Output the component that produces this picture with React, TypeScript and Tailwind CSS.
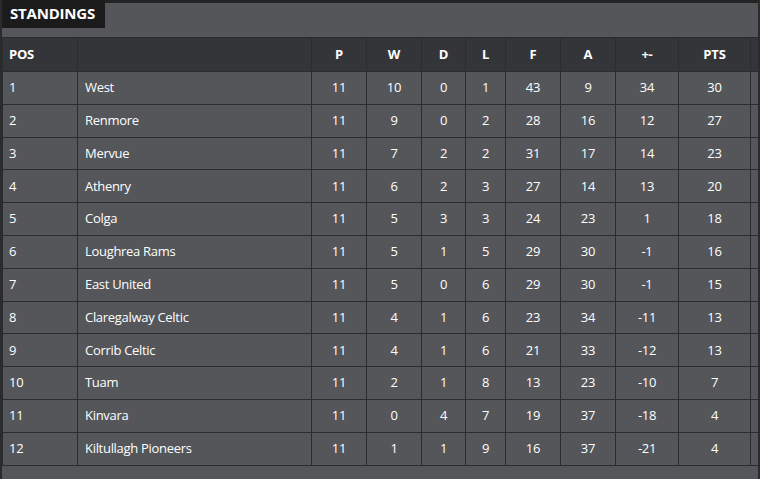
import React from "react";

type Row = [number, string, number, number, number, number, number, number, number, number];

const rows: Row[] = [
  [1, "West", 11, 10, 0, 1, 43, 9, 34, 30],
  [2, "Renmore", 11, 9, 0, 2, 28, 16, 12, 27],
  [3, "Mervue", 11, 7, 2, 2, 31, 17, 14, 23],
  [4, "Athenry", 11, 6, 2, 3, 27, 14, 13, 20],
  [5, "Colga", 11, 5, 3, 3, 24, 23, 1, 18],
  [6, "Loughrea Rams", 11, 5, 1, 5, 29, 30, -1, 16],
  [7, "East United", 11, 5, 0, 6, 29, 30, -1, 15],
  [8, "Claregalway Celtic", 11, 4, 1, 6, 23, 34, -11, 13],
  [9, "Corrib Celtic", 11, 4, 1, 6, 21, 33, -12, 13],
  [10, "Tuam", 11, 2, 1, 8, 13, 23, -10, 7],
  [11, "Kinvara", 11, 0, 4, 7, 19, 37, -18, 4],
  [12, "Kiltullagh Pioneers", 11, 1, 1, 9, 16, 37, -21, 4],
];

const widths = ["w-[75px]", "w-[234px]", "w-[55px]", "w-[55px]", "w-[44px]", "w-[40px]", "w-[55px]", "w-[55px]", "w-[63px]", "w-[72px]", "w-[40px]"];
const heads = ["POS", "", "P", "W", "D", "L", "F", "A", "+-", "PTS", ""];

export default function App() {
  return (
    <div
      className="w-[760px] h-[479px] overflow-hidden bg-[#54565a] border-l-2 border-r-2 border-[#2a2b2d] text-white"
      style={{ fontFamily: '"Open Sans", "Noto Sans", sans-serif' }}
    >
      <div className="flex h-[28px]">
        <div className="h-[28px] w-[103px] bg-[#1b1b1b] pl-[8px] pt-[3px] text-[15px] font-bold leading-[21px] tracking-[-0.2px]">STANDINGS</div>
        <div className="flex-1 h-[3px] bg-[#222325]" />
      </div>
      <div className="mt-[9px] w-[800px] border-l border-t border-[#2b2c2f]">
        <div className="flex h-[34px] bg-[#343538]">
          {heads.map((h, i) => (
            <div
              key={i}
              className={`${widths[i]} shrink-0 border-r border-b border-[#2b2c2f] flex items-center text-[13px] font-bold tracking-[-0.2px] ${i === 0 ? "pl-[6px]" : "justify-center"}`}
            >
              {h}
            </div>
          ))}
        </div>
        {rows.map((r) => (
          <div key={r[0]} className="flex h-[32.8px]">
            {widths.map((w, i) => (
              <div
                key={i}
                className={`${w} shrink-0 border-r border-b border-[#2b2c2f] flex items-center text-[13px] tracking-[-0.3px] ${i === 0 ? "pl-[6px]" : i === 1 ? "pl-[7px]" : "justify-center"}`}
              >
                {i < 10 ? r[i] : ""}
              </div>
            ))}
          </div>
        ))}
      </div>
    </div>
  );
}
